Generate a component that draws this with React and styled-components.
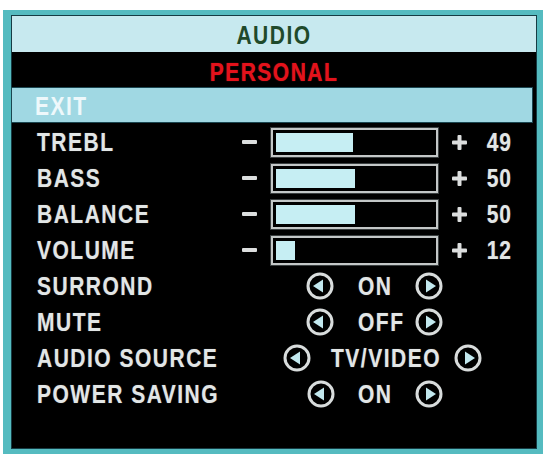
import React from "react";
import styled, { createGlobalStyle } from "styled-components";

const Global = createGlobalStyle`
  html, body {
    margin: 0;
    padding: 0;
    background: #ffffff;
    overflow: hidden;
  }
  body {
    font-family: "Liberation Sans", Arial, sans-serif;
  }
`;

const Frame = styled.div`
  margin: 10px 0 0 3px;
  width: 540px;
  height: 444px;
  box-sizing: border-box;
  padding: 5px 6px 5px 8px;
  background: #55bbc0;
`;

const Screen = styled.div`
  width: 526px;
  height: 434px;
  box-sizing: border-box;
  border: 1px solid #163c44;
  background: #000;
  display: flex;
  flex-direction: column;
`;

/* OSD lettering is taller than Arial, stretch it vertically */
const Text = styled.span`
  display: inline-block;
  font-family: "Liberation Sans", Arial, sans-serif;
  font-weight: bold;
  font-size: 21px;
  letter-spacing: 1.5px;
  line-height: 1;
  white-space: nowrap;
  transform: scaleY(1.2);
`;

const TitleBar = styled.div`
  height: 36px;
  background: #c7e9ef;
  display: flex;
  align-items: center;
  justify-content: center;
  color: #1f4a2b;
`;

const ModeBar = styled.div`
  height: 35px;
  display: flex;
  align-items: center;
  justify-content: center;
  padding-top: 3px;
  box-sizing: border-box;
  color: #e3121b;
  text-shadow: 0 0 1px rgba(255, 40, 40, 0.6);
`;

const ExitBar = styled.div`
  height: 34px;
  margin: 1px 4px 0 0;
  background: #a0d8e3;
  box-shadow: 0 0 0 1px #1b4650;
  display: flex;
  align-items: center;
  padding-left: 23px;
  color: #eef8fb;
`;

const Body = styled.div`
  padding-top: 2px;
  display: flex;
  flex-direction: column;
`;

const Row = styled.div`
  height: 36px;
  display: flex;
  align-items: center;
  padding-left: 25px;
  color: #e2e6e6;
  text-shadow: 0 0 1px rgba(255, 255, 255, 0.35);
`;

const Label = styled(Text)`
  width: 205px;
  flex: none;
`;

const Minus = styled.span`
  width: 15px;
  height: 4px;
  border-radius: 1px;
  background: #dcdede;
  margin-right: 14px;
  flex: none;
`;

const Bar = styled.div`
  width: 167px;
  height: 29px;
  box-sizing: border-box;
  border: 2px solid #c3c7c7;
  box-shadow: 0 0 0 1px #3a3f40;
  padding: 3px;
  background: #000;
  flex: none;
`;

const Fill = styled.div`
  height: 100%;
  background: #c6eef3;
`;

const PlusIcon = styled.svg`
  margin-left: 14px;
  flex: none;
`;

const Value = styled(Text)`
  width: 45px;
  text-align: right;
  letter-spacing: 1px;
`;

const Control = styled.div`
  display: flex;
  align-items: center;
  padding-left: ${(p) => p.$start}px;
`;

const Choice = styled(Text)`
  margin-left: ${(p) => p.$lead}px;
  min-width: ${(p) => p.$slot}px;
  margin-right: ${(p) => p.$trail}px;
`;

const Plus = () => (
  <PlusIcon width="15" height="15" viewBox="0 0 15 15">
    <rect x="0" y="5.5" width="15" height="4" rx="1" fill="#dcdede" />
    <rect x="5.5" y="0" width="4" height="15" rx="1" fill="#dcdede" />
  </PlusIcon>
);

const Arrow = ({ dir }) => (
  <svg width="28" height="28" viewBox="0 0 28 28" style={{ flex: "none" }}>
    <circle cx="14" cy="14" r="12" fill="none" stroke="#d8dcdc" strokeWidth="3" />
    {dir === "left" ? (
      <polygon points="7,14 17,7.5 17,20.5" fill="#c2e8ee" />
    ) : (
      <polygon points="21,14 11,7.5 11,20.5" fill="#c2e8ee" />
    )}
  </svg>
);

const levels = [
  { name: "TREBL", value: 49 },
  { name: "BASS", value: 50 },
  { name: "BALANCE", value: 50 },
  { name: "VOLUME", value: 12 },
];

const options = [
  { name: "SURROND", value: "ON", start: 64, lead: 24, slot: 57, trail: 0 },
  { name: "MUTE", value: "OFF", start: 64, lead: 24, slot: 57, trail: 0 },
  { name: "AUDIO SOURCE", value: "TV/VIDEO", start: 41, lead: 20, slot: 0, trail: 13 },
  { name: "POWER SAVING", value: "ON", start: 65, lead: 23, slot: 57, trail: 0 },
];

const App = () => {
  return (
    <>
      <Global />
      <Frame>
        <Screen>
          <TitleBar>
            <Text>AUDIO</Text>
          </TitleBar>
          <ModeBar>
            <Text>PERSONAL</Text>
          </ModeBar>
          <ExitBar>
            <Text>EXIT</Text>
          </ExitBar>
          <Body>
            {levels.map((l) => (
              <Row key={l.name}>
                <Label>{l.name}</Label>
                <Minus />
                <Bar>
                  <Fill style={{ width: `${l.value}%` }} />
                </Bar>
                <Plus />
                <Value>{l.value}</Value>
              </Row>
            ))}
            {options.map((o) => (
              <Row key={o.name}>
                <Label>{o.name}</Label>
                <Control $start={o.start}>
                  <Arrow dir="left" />
                  <Choice $lead={o.lead} $slot={o.slot} $trail={o.trail}>
                    {o.value}
                  </Choice>
                  <Arrow dir="right" />
                </Control>
              </Row>
            ))}
          </Body>
        </Screen>
      </Frame>
    </>
  );
};

export default App;
